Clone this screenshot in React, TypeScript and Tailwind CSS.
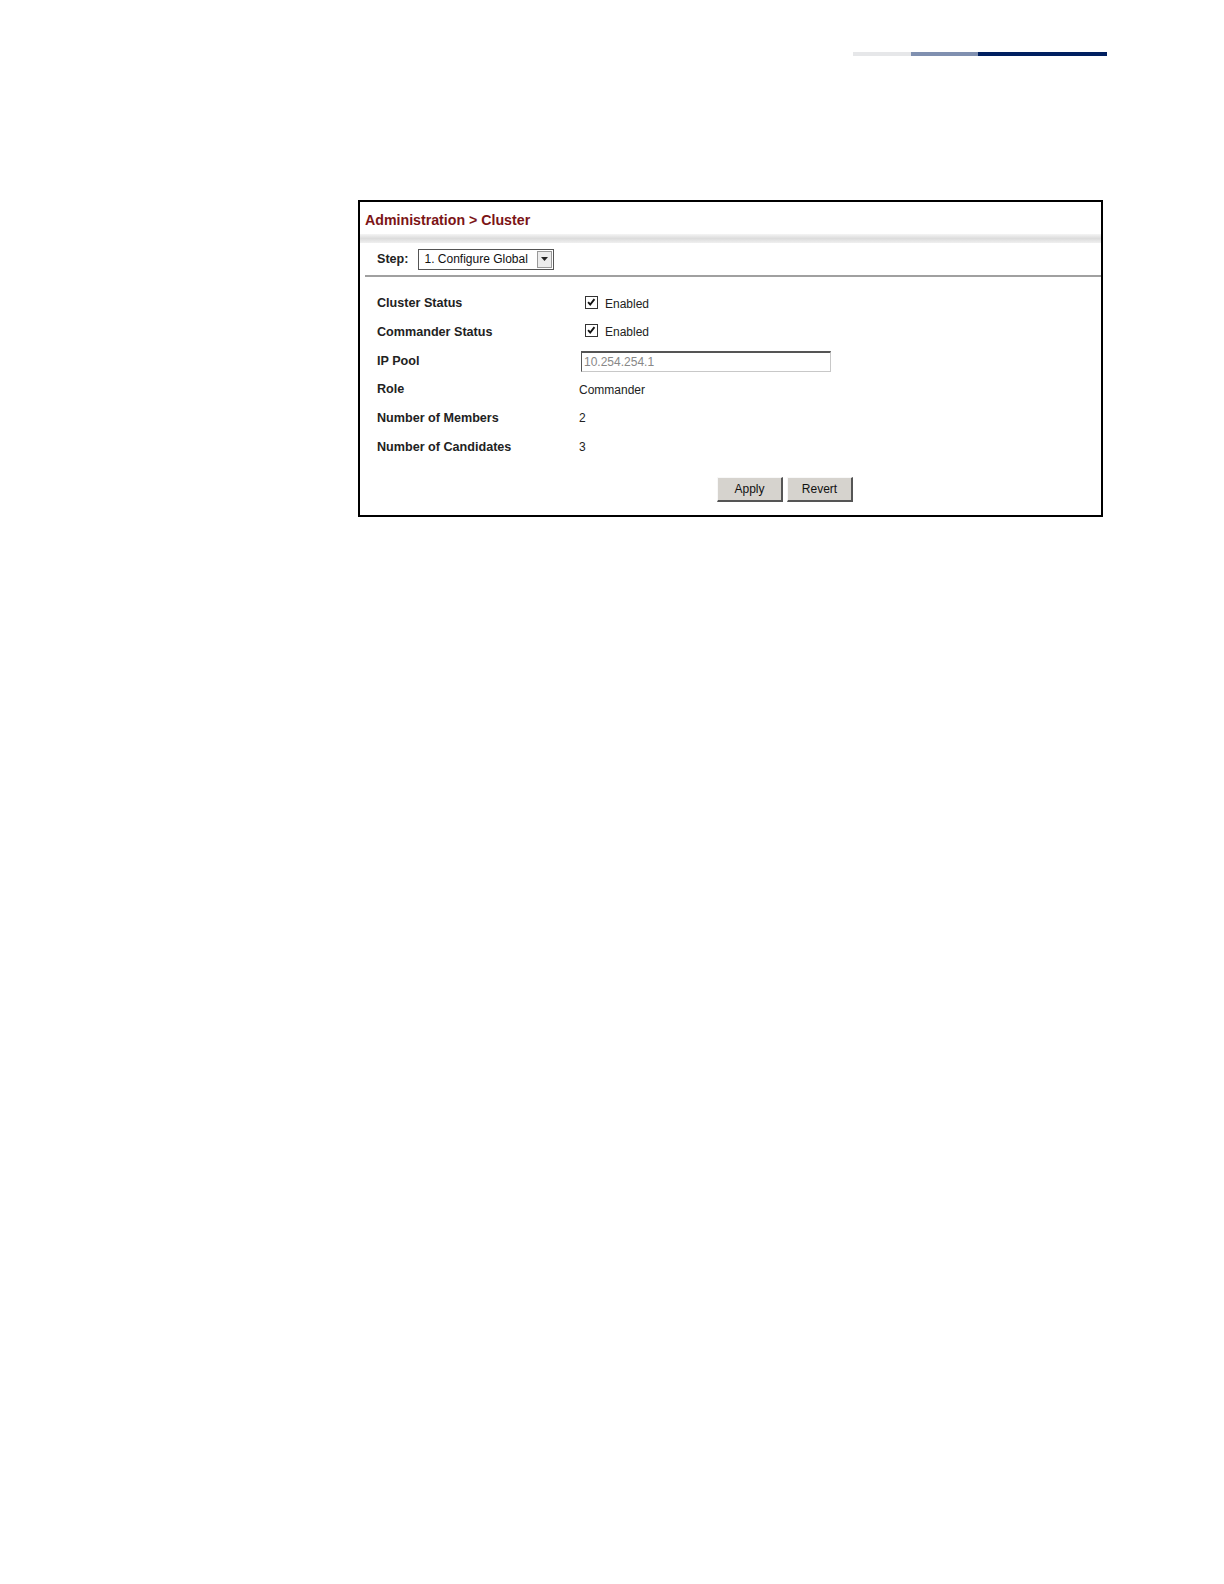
import React from "react";

function CheckBox() {
	return (
		<span className="inline-flex h-[13px] w-[13px] items-center justify-center border border-[#333] bg-white">
			<svg viewBox="0 0 13 13" className="h-[11px] w-[11px]">
				<path d="M2.5 6 L5 9 L10 2.5" fill="none" stroke="#111" strokeWidth={2.2} />
			</svg>
		</span>
	);
}

function Row({ label, children }: { label: string; children: React.ReactNode }) {
	return (
		<div className="flex h-[28.7px] items-center">
			<div className="w-[202px] text-[12.6px] font-bold text-[#222]">{label}</div>
			<div className="flex items-center text-[12px] text-[#222]">{children}</div>
		</div>
	);
}

export default function App() {
	return (
		<div className="w-full bg-white pb-[40px] font-['Liberation_Sans',Arial,sans-serif]">
			<div className="flex justify-end pr-[117px] pt-[52px]">
				<div className="h-[4px] w-[58px] bg-[#e6e7e9]" />
				<div className="h-[4px] w-[67px] bg-[#8090b0]" />
				<div className="h-[4px] w-[129px] bg-[#002060]" />
			</div>

			<div className="ml-[358px] mt-[144px] w-[745px] border-2 border-black">
				<div className="px-[5px] pt-[8px] pb-[3px] text-[14.2px] font-bold text-[#7b1416]">
					Administration &gt; Cluster
				</div>
				<div className="h-[9px] bg-gradient-to-b from-[#f4f4f4] via-[#dcdcdc] to-[#f0f0f0]" />
				<div className="ml-[5px] flex h-[34px] items-center border-b-2 border-[#a0a0a0] pl-[12px]">
					<span className="mr-[10px] text-[12.6px] font-bold text-[#222]">Step:</span>
					<div className="flex h-[21px] w-[136px] items-center border border-[#555] bg-white">
						<span className="flex-1 pl-[5px] text-[12px] text-[#111]">1. Configure Global</span>
						<span className="mr-[1px] flex h-[17px] w-[15px] items-center justify-center border border-[#999] bg-[#ececec]">
							<svg viewBox="0 0 7 4" className="h-[4px] w-[7px]">
								<path d="M0 0 H7 L3.5 4 Z" fill="#222" />
							</svg>
						</span>
					</div>
				</div>

				<div className="pl-[17px] pt-[12px]">
					<Row label="Cluster Status">
						<span className="ml-[6px] mr-[7px]">
							<CheckBox />
						</span>
						Enabled
					</Row>
					<Row label="Commander Status">
						<span className="ml-[6px] mr-[7px]">
							<CheckBox />
						</span>
						Enabled
					</Row>
					<Row label="IP Pool">
						<div className="ml-[2px] flex h-[21px] w-[250px] items-center border border-[#c8c8c8] border-l-[#555] border-t-2 border-t-[#555] bg-white pl-[2px] text-[12px] text-[#888]">
							10.254.254.1
						</div>
					</Row>
					<Row label="Role">Commander</Row>
					<Row label="Number of Members">2</Row>
					<Row label="Number of Candidates">3</Row>
				</div>

				<div className="flex gap-[4px] pb-[13px] pl-[357px] pt-[16px]">
					<button className="h-[25px] w-[66px] border border-[#f8f8f8] border-b-2 border-r-2 border-b-[#555] border-r-[#555] bg-[#d6d3ce] text-[12px] text-[#111]">
						Apply
					</button>
					<button className="h-[25px] w-[66px] border border-[#f8f8f8] border-b-2 border-r-2 border-b-[#555] border-r-[#555] bg-[#d6d3ce] text-[12px] text-[#111]">
						Revert
					</button>
				</div>
			</div>
		</div>
	);
}
